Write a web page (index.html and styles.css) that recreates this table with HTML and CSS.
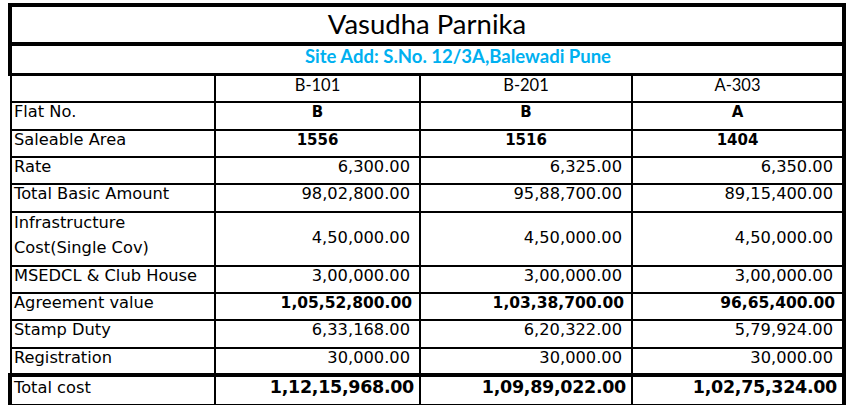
FILE: index.html
```html
<!DOCTYPE html>
<html>
<head>
<meta charset="utf-8">
<link rel="stylesheet" href="styles.css">
</head>
<body>
<div class="sheet">
  <div class="title">Vasudha Parnika</div>
  <div class="site">Site Add: S.No. 12/3A,Balewadi Pune</div>
  <table class="grid">
    <colgroup>
      <col class="c1"><col class="c2"><col class="c3"><col class="c4">
    </colgroup>
    <tr class="head r27">
      <td class="label"></td><td class="hd">B-101</td><td class="hd">B-201</td><td class="hd">A-303</td>
    </tr>
    <tr class="r28">
      <td class="label">Flat No.</td><td class="ctr">B</td><td class="ctr">B</td><td class="ctr">A</td>
    </tr>
    <tr class="r27">
      <td class="label">Saleable Area</td><td class="ctr">1556</td><td class="ctr">1516</td><td class="ctr">1404</td>
    </tr>
    <tr class="r27">
      <td class="label">Rate</td><td class="num">6,300.00</td><td class="num">6,325.00</td><td class="num">6,350.00</td>
    </tr>
    <tr class="r28">
      <td class="label">Total Basic Amount</td><td class="num">98,02,800.00</td><td class="num">95,88,700.00</td><td class="num">89,15,400.00</td>
    </tr>
    <tr class="r54 infra">
      <td class="label wrap"><div class="wrap-text">Infrastructure<br>Cost(Single Cov)</div></td><td class="num">4,50,000.00</td><td class="num">4,50,000.00</td><td class="num">4,50,000.00</td>
    </tr>
    <tr class="r27">
      <td class="label">MSEDCL &amp; Club House</td><td class="num">3,00,000.00</td><td class="num">3,00,000.00</td><td class="num">3,00,000.00</td>
    </tr>
    <tr class="r27">
      <td class="label">Agreement value</td><td class="num bold">1,05,52,800.00</td><td class="num bold">1,03,38,700.00</td><td class="num bold">96,65,400.00</td>
    </tr>
    <tr class="r28">
      <td class="label">Stamp Duty</td><td class="num">6,33,168.00</td><td class="num">6,20,322.00</td><td class="num">5,79,924.00</td>
    </tr>
    <tr class="r28 before-total">
      <td class="label">Registration</td><td class="num">30,000.00</td><td class="num">30,000.00</td><td class="num">30,000.00</td>
    </tr>
    <tr class="total">
      <td class="label">Total cost</td><td class="num big">1,12,15,968.00</td><td class="num big">1,09,89,022.00</td><td class="num big">1,02,75,324.00</td>
    </tr>
  </table>
</div>
</body>
</html>
```

FILE: styles.css
```css
html, body {
  margin: 0;
  padding: 0;
  background: #fff;
}

.sheet {
  margin: 3px 0 0 8px;
  width: 838px;
  color: #000;
}

.title {
  box-sizing: border-box;
  height: 43px;
  border: 4px solid #000;
  font-family: Lato, "Liberation Sans", sans-serif;
  font-size: 27.5px;
  line-height: 34px;
  text-align: center;
}

.site {
  box-sizing: border-box;
  height: 30px;
  border: 4px solid #000;
  border-top: 0;
  border-bottom-width: 3px;
  padding-left: 62px;
  font-family: Lato, "Liberation Sans", sans-serif;
  font-weight: 700;
  font-size: 18.5px;
  line-height: 21px;
  color: #00b0f0;
  text-align: center;
}

.grid {
  margin-left: 2px;
  width: 836px;
  table-layout: fixed;
  border-collapse: separate;
  border-spacing: 0;
  font-family: "DejaVu Sans", Verdana, sans-serif;
  font-size: 16.25px;
}

.c1 { width: 206px; }
.c2 { width: 205px; }
.c3 { width: 212px; }
.c4 { width: 213px; }

.grid td {
  box-sizing: border-box;
  padding: 0;
  border-right: 2px solid #000;
  border-bottom: 2px solid #000;
  vertical-align: top;
  white-space: nowrap;
  line-height: 18px;
}

.grid td:first-child {
  border-left: 2px solid #000;
}

.grid td:last-child {
  border-right-width: 4px;
}

.r27 td { height: 27px; }
.r28 td { height: 28px; }
.r54 td { height: 54px; }

.label {
  padding-left: 2px !important;
  text-align: left;
}

.wrap {
  white-space: normal;
}

.wrap-text {
  line-height: 25px;
  margin-top: -3px;
}

.infra .num {
  vertical-align: middle;
  line-height: 21px;
  padding-bottom: 4px;
}

.hd {
  font-family: Lato, "Liberation Sans", sans-serif;
  font-size: 16.5px;
  text-align: center;
  line-height: 19px !important;
}

.ctr {
  text-align: center;
  font-weight: 700;
  font-size: 15px;
  line-height: 18.5px !important;
}

.num {
  text-align: right;
  padding-right: 9px !important;
}

.bold {
  font-weight: 700;
  font-size: 15.5px;
  line-height: 18.5px !important;
  padding-right: 7px !important;
}

.before-total td {
  border-bottom-width: 4px;
}

.total td {
  height: 31px;
  border-bottom-width: 4px;
  line-height: 21.5px;
}

.total td:first-child {
  box-shadow: -2px 0 0 #000, -2px -4px 0 #000;
}

.big {
  font-weight: 700;
  font-size: 17.5px;
  letter-spacing: -0.3px;
  line-height: 21px !important;
  padding-right: 5px !important;
}
```
